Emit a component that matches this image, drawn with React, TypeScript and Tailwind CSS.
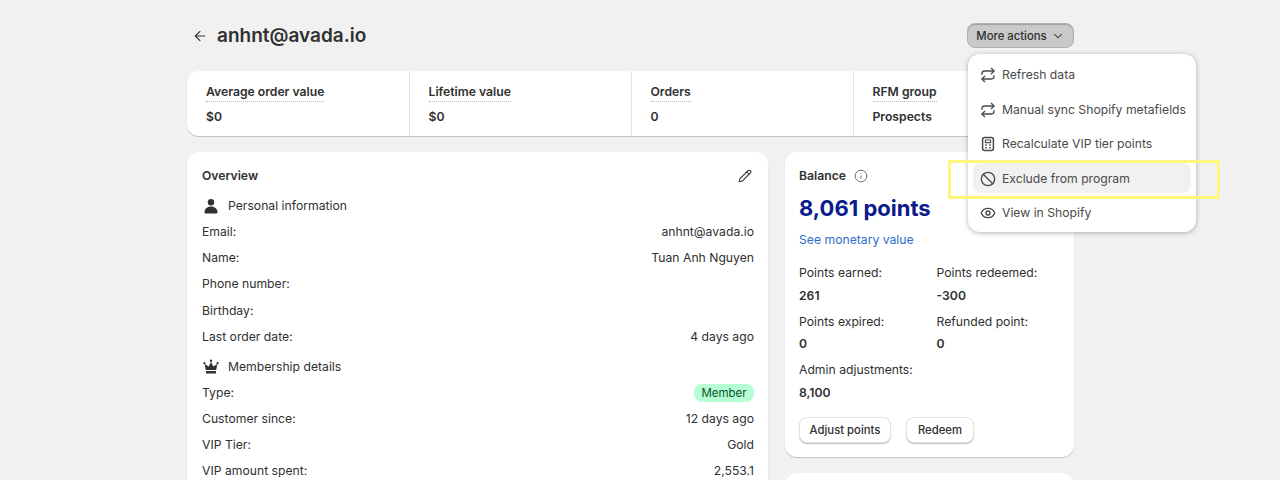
import { ArrowLeft, ChevronDown, Repeat, Ban, Eye, Info, Pencil } from "lucide-react";

const stats = [
  { label: "Average order value", value: "$0" },
  { label: "Lifetime value", value: "$0" },
  { label: "Orders", value: "0" },
  { label: "RFM group", value: "Prospects" },
];

const personal = [
  ["Email:", "anhnt@avada.io"],
  ["Name:", "Tuan Anh Nguyen"],
  ["Phone number:", ""],
  ["Birthday:", ""],
  ["Last order date:", "4 days ago"],
];

const points = [
  ["Points earned:", "261"],
  ["Points redeemed:", "-300"],
  ["Points expired:", "0"],
  ["Refunded point:", "0"],
  ["Admin adjustments:", "8,100"],
];

function Row({ label, children }: { label: string; children?: React.ReactNode }) {
  return (
    <div className="flex h-[20px] items-center justify-between">
      <span>{label}</span>
      {children}
    </div>
  );
}

function PersonIcon() {
  return (
    <svg className="h-4 w-4" viewBox="0 0 16 16" fill="#303030">
      <circle cx="8" cy="4.2" r="3.2" />
      <path d="M1.5 14.6c0-3.6 2.6-6 6.5-6s6.5 2.4 6.5 6c0 .5-.4.9-.9.9H2.4c-.5 0-.9-.4-.9-.9z" />
    </svg>
  );
}

function CrownIcon() {
  return (
    <svg className="h-4 w-4" viewBox="0 0 16 16" fill="#303030">
      <circle cx="8" cy="1.8" r="1.2" />
      <circle cx="1.4" cy="4.2" r="1.1" />
      <circle cx="14.6" cy="4.2" r="1.1" />
      <path d="M8 3l2.3 4.4L14.4 5l-1.2 6H2.8L1.6 5l4.1 2.4z" />
      <rect x="3" y="12" width="10" height="2.6" rx="0.6" />
    </svg>
  );
}

function CalcIcon() {
  return (
    <svg className="h-4 w-4" viewBox="0 0 16 16" fill="none" stroke="currentColor" strokeWidth="1.5">
      <rect x="2.6" y="1.4" width="10.8" height="13.2" rx="2" />
      <rect x="5.4" y="4" width="5.2" height="2.6" rx="0.4" strokeWidth="1.2" />
      <path d="M5.2 9h1.6M9.2 9h1.6M5.2 11.8h1.6M9.2 11.8h1.6" strokeWidth="1.5" />
    </svg>
  );
}

const actions = [
  { label: "Refresh data", icon: <Repeat className="h-4 w-4" strokeWidth={2} /> },
  { label: "Manual sync Shopify metafields", icon: <Repeat className="h-4 w-4" strokeWidth={2} /> },
  { label: "Recalculate VIP tier points", icon: <CalcIcon /> },
  { label: "Exclude from program", icon: <Ban className="h-4 w-4" strokeWidth={2} />, active: true },
  { label: "View in Shopify", icon: <Eye className="h-4 w-4" strokeWidth={2} /> },
];

export default function App() {
  return (
    <div className="relative h-[480px] overflow-hidden bg-[#f1f1f1] font-['Inter',sans-serif] text-[12.2px] leading-5 text-[#303030]">
      <div className="ml-[187px] w-[887px]">
        <div className="flex h-[71px] items-center justify-between">
          <div className="flex items-center gap-[9px] pl-[5px]">
            <ArrowLeft className="h-4 w-4" strokeWidth={1.6} />
            <h1 className="text-[19px] font-semibold leading-6">anhnt@avada.io</h1>
          </div>
          <button className="flex h-[25px] w-[107px] items-center justify-center gap-[4px] rounded-lg border border-[#b0b0b0] bg-[#c9c9c9] text-[11.3px] font-medium shadow-[inset_0_1px_1px_rgba(0,0,0,0.2)]">
            More actions
            <ChevronDown className="h-[14px] w-[14px]" strokeWidth={1.8} />
          </button>
        </div>

        <div className="grid h-[65px] grid-cols-[222.5px_222px_222px_1fr] rounded-xl bg-white shadow-[0_1px_1px_rgba(0,0,0,0.2)]">
          {stats.map((s, i) => (
            <div key={s.label} className={`pl-[19px] pt-[11px] ${i < 3 ? "border-r border-[#e3e3e3]" : ""}`}>
              <div className="w-fit border-b border-dotted border-[#b5b5b5] font-semibold leading-[19px]">{s.label}</div>
              <div className="mt-[5px] font-semibold">{s.value}</div>
            </div>
          ))}
        </div>

        <div className="mt-4 flex items-start gap-[17px]">
          <div className="flex h-[400px] w-[581px] flex-col rounded-xl bg-white pl-[15px] pr-[14px] pt-[14px] shadow-[0_1px_1px_rgba(0,0,0,0.2)]">
            <div className="flex h-[20px] items-center justify-between">
              <span className="font-semibold">Overview</span>
              <Pencil className="mr-[2px] h-[14px] w-[14px]" strokeWidth={1.8} />
            </div>
            <div className="mt-[10px] flex h-[20px] items-center gap-[9px] pl-[1px]">
              <PersonIcon />
              <span>Personal information</span>
            </div>
            <div className="mt-[6px] flex flex-col gap-[6.2px]">
              {personal.map(([label, value]) => (
                <Row key={label} label={label}>
                  <span>{value}</span>
                </Row>
              ))}
            </div>
            <div className="mt-[10px] flex h-[20px] items-center gap-[9px] pl-[1px]">
              <CrownIcon />
              <span>Membership details</span>
            </div>
            <div className="mt-[6px] flex flex-col gap-[6.2px]">
              <Row label="Type:">
                <span className="w-[60px] rounded-lg bg-[#b4fed2] text-center text-[11.5px] leading-[18px] text-[#0c5132]">Member</span>
              </Row>
              <Row label="Customer since:">
                <span>12 days ago</span>
              </Row>
              <Row label="VIP Tier:">
                <span>Gold</span>
              </Row>
              <Row label="VIP amount spent:">
                <span>2,553.1</span>
              </Row>
            </div>
          </div>

          <div className="flex w-[289px] flex-col gap-4">
            <div className="h-[305px] rounded-xl bg-white px-[14px] pt-[14px] shadow-[0_1px_1px_rgba(0,0,0,0.2)]">
              <div className="flex h-[20px] items-center gap-[8px]">
                <span className="font-semibold">Balance</span>
                <Info className="h-[14px] w-[14px] text-[#616161]" strokeWidth={1.5} />
              </div>
              <div className="mt-[6px] text-[22px] font-bold leading-[32px] text-[#0b1a8c]">8,061 points</div>
              <div className="mt-[6px] text-[#2c6ecb]">See monetary value</div>
              <div className="mt-[13px] grid grid-cols-[137.5px_1fr] gap-y-[6px]">
                {points.map(([label, value]) => (
                  <div key={label}>
                    <div className="h-[20px]">{label}</div>
                    <div className="mt-[2.5px] h-[20px] font-semibold">{value}</div>
                  </div>
                ))}
              </div>
              <div className="mt-[14px] flex gap-[15px]">
                <button className="h-[26px] w-[92px] rounded-lg border border-[#e3e3e3] bg-white text-[11.3px] font-medium shadow-[0_1px_1px_rgba(0,0,0,0.25)]">
                  Adjust points
                </button>
                <button className="h-[26px] w-[68px] rounded-lg border border-[#e3e3e3] bg-white text-[11.3px] font-medium shadow-[0_1px_1px_rgba(0,0,0,0.25)]">
                  Redeem
                </button>
              </div>
            </div>
            <div className="h-[100px] rounded-xl bg-white shadow-[0_1px_1px_rgba(0,0,0,0.2)]" />
          </div>
        </div>
      </div>

      <div className="absolute left-[968px] top-[54px] w-[228px] rounded-xl bg-white p-[5px] shadow-[0_1px_5px_rgba(0,0,0,0.3)]">
        <div className="flex flex-col gap-[4.5px]">
          {actions.map((a) => (
            <div key={a.label} className={`flex h-[30px] items-center gap-[6px] rounded-lg pl-[7px] pt-[2px] text-[#4a4a4a] ${a.active ? "bg-[#f1f1f1]" : ""}`}>
              {a.icon}
              <span>{a.label}</span>
            </div>
          ))}
        </div>
      </div>

      <div className="absolute left-[948px] top-[160px] h-[39px] w-[272px] border-[3px] border-[#fdf77e]" />
    </div>
  );
}
